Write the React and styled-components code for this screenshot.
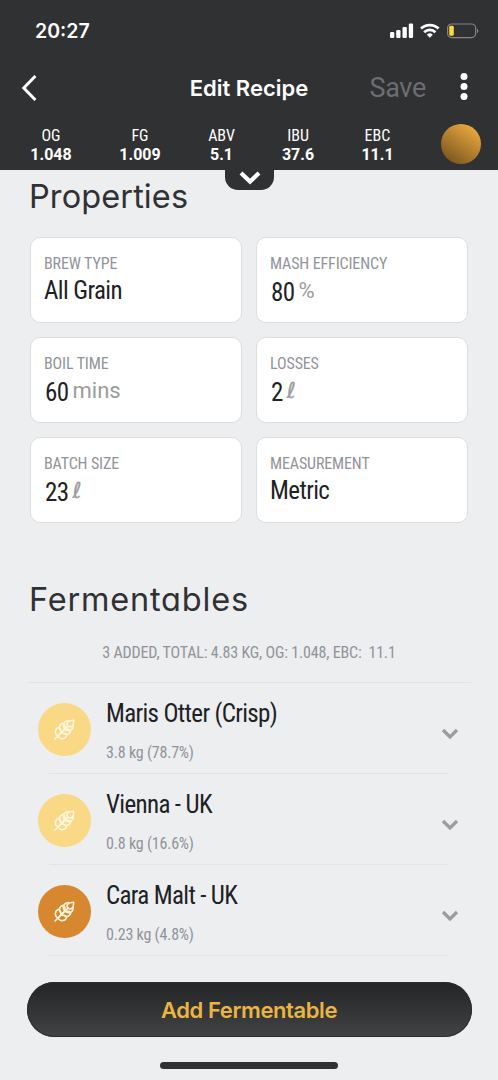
import React, { useState } from "react";
import styled, { createGlobalStyle } from "styled-components";

const stats = [
  { label: "OG", value: "1.048", width: 102 },
  { label: "FG", value: "1.009", width: 76 },
  { label: "ABV", value: "5.1", width: 87 },
  { label: "IBU", value: "37.6", width: 66 },
  { label: "EBC", value: "11.1", width: 93 },
];

const properties = [
  { label: "Brew Type", value: "All Grain" },
  { label: "Mash Efficiency", value: "80", unit: "%" },
  { label: "Boil Time", value: "60", unit: "mins" },
  { label: "Losses", value: "2", unit: "ℓ" },
  { label: "Batch Size", value: "23", unit: "ℓ" },
  { label: "Measurement", value: "Metric" },
];

const fermentables = [
  { name: "Maris Otter (Crisp)", amount: "3.8 kg (78.7%)", color: "#f9d985" },
  { name: "Vienna - UK", amount: "0.8 kg (16.6%)", color: "#f9d985" },
  { name: "Cara Malt - UK", amount: "0.23 kg (4.8%)", color: "#d7872e" },
];

function WheatIcon() {
  return (
    <svg width="21" height="21" viewBox="0 0 21 21" fill="none" stroke="#fff6df" strokeWidth="1.5" strokeLinecap="round" strokeLinejoin="round">
      <path d="M1 20L4 17" />
      <path d="M14 7C11.6 4.6 13.4 1.4 19.8 1.2C19.6 7.6 16.4 9.4 14 7Z" />
      <path d="M11 10C8 7.4 8.8 2.2 14.6 1.6" />
      <path d="M11 10C13.6 13 18.8 12.2 19.4 6.4" />
      <path d="M14 7L11 10" />
      <path d="M8 13C4.4 11 4.4 5.6 9.2 4.2C12 6.4 11.8 10 8 13Z" />
      <path d="M8 13C10 16.6 15.4 16.6 16.8 11.8C14.6 9 11 9.2 8 13Z" />
      <path d="M4 17C.4 15.2 .2 9.6 5 8.2C8 10.8 7.6 14.4 4 17Z" />
      <path d="M4 17C5.8 20.6 11.4 20.8 12.8 16C10.2 13 6.6 13.4 4 17Z" />
    </svg>
  );
}

export default function App() {
  const [open, setOpen] = useState(null);

  return (
    <Container>
      <GlobalStyle />
      <Header>
        <StatusBar>
          <Time>20:27</Time>
          <svg width="90" height="16" viewBox="0 0 90 16" fill="#fff">
            <rect x="0" y="9" width="4.3" height="6" rx="1.2" />
            <rect x="6.2" y="7" width="4.3" height="8" rx="1.2" />
            <rect x="12.5" y="4" width="4.3" height="11" rx="1.2" />
            <rect x="18.8" y="0.5" width="4.3" height="14.5" rx="1.2" />
            <g fill="none" stroke="#fff" strokeWidth="2.7">
              <path d="M31 5.6A12.8 12.8 0 0 1 48.6 5.6" />
              <path d="M34.2 9.2A8 8 0 0 1 45.4 9.2" />
            </g>
            <path d="M39.8 14.8L36.8 11.8A4.3 4.3 0 0 1 42.8 11.8Z" />
            <rect x="57.6" y="1" width="28" height="13.6" rx="4" fill="none" stroke="#85868a" strokeWidth="1.2" />
            <rect x="59.2" y="2.8" width="4.6" height="10" rx="1.4" fill="#fbd63f" />
            <path d="M87 5.4A2.8 2.8 0 0 1 87 10.2Z" fill="#85868a" />
          </svg>
        </StatusBar>
        <NavBar>
          <IconButton aria-label="Back">
            <svg width="16" height="28" viewBox="0 0 16 28" fill="none" stroke="#fff" strokeWidth="3">
              <path d="M14.4 2L2.8 14L14.4 26" />
            </svg>
          </IconButton>
          <Title>Edit Recipe</Title>
          <SaveButton>Save</SaveButton>
          <IconButton aria-label="More">
            <svg width="8" height="28" viewBox="0 0 8 28" fill="#fff">
              <circle cx="4" cy="3.5" r="3.5" />
              <circle cx="4" cy="13.5" r="3.5" />
              <circle cx="4" cy="23.5" r="3.5" />
            </svg>
          </IconButton>
        </NavBar>
        <Stats>
          {stats.map((s) => (
            <Stat key={s.label} $width={s.width}>
              <span>{s.label}</span>
              <b>{s.value}</b>
            </Stat>
          ))}
          <BeerColor />
        </Stats>
        <PullTab aria-label="Expand">
          <svg width="24" height="16" viewBox="0 0 24 16" fill="none" stroke="#fff" strokeWidth="4.2">
            <path d="M3 4L12 12.6L21 4" />
          </svg>
        </PullTab>
      </Header>

      <Content>
        <Heading $spacing={0.1}>Properties</Heading>
        <Grid>
          {properties.map((p) => (
            <Card key={p.label}>
              <Label>{p.label}</Label>
              <Value $hasUnit={!!p.unit}>
                {p.value}
                {p.unit && <Unit $script={p.unit === "ℓ"}>{p.unit}</Unit>}
              </Value>
            </Card>
          ))}
        </Grid>

        <Heading $spacing={0.8}>Fermentables</Heading>
        <Summary>3 added, total: 4.83 kg, OG: 1.048, EBC:&nbsp; 11.1</Summary>
        <List>
          {fermentables.map((f, i) => (
            <Row key={f.name} onClick={() => setOpen(open === i ? null : i)}>
              <Badge $color={f.color}>
                <WheatIcon />
              </Badge>
              <RowText>
                <Name>{f.name}</Name>
                <Amount>{f.amount}</Amount>
              </RowText>
              <Chevron width="18" height="12" viewBox="0 0 18 12" $open={open === i}>
                <path d="M2 2L9 9L16 2" />
              </Chevron>
            </Row>
          ))}
        </List>
      </Content>

      <Footer>
        <AddButton>Add Fermentable</AddButton>
        <HomeBar />
      </Footer>
    </Container>
  );
}

const GlobalStyle = createGlobalStyle`
  * {
    box-sizing: border-box;
  }
  body {
    margin: 0;
    background: #edeef0;
    font-family: "Roboto Condensed", Roboto, sans-serif;
    font-stretch: 75%;
  }
  button {
    padding: 0;
    border: none;
    background: none;
    cursor: pointer;
  }
`;

const Container = styled.div`
  display: flex;
  flex-direction: column;
  height: 1080px;
  overflow: hidden;
  color: #202124;
`;

const Header = styled.header`
  position: relative;
  flex: none;
  height: 170px;
  background: #303133;
  color: #fff;
`;

const StatusBar = styled.div`
  display: flex;
  justify-content: space-between;
  align-items: center;
  height: 60px;
  padding: 1px 18px 0 35px;
`;

const Time = styled.span`
  font: 600 19.5px Inter, sans-serif;
`;

const NavBar = styled.nav`
  display: grid;
  grid-template-columns: 170px 158px 98px 72px;
  align-items: center;
  height: 55px;
  button:first-child {
    justify-self: start;
    margin-left: 21px;
  }
  button:last-child {
    margin: -2px 0 0 3px;
  }
`;

const IconButton = styled.button`
  display: flex;
  justify-content: center;
`;

const Title = styled.h1`
  margin: 0;
  text-align: center;
  white-space: nowrap;
  font: 600 22px Inter, sans-serif;
`;

const SaveButton = styled.button`
  justify-self: end;
  color: #6c6d6f;
  font: 400 27px Roboto, sans-serif;
  font-stretch: 100%;
  letter-spacing: -0.3px;
`;

const Stats = styled.div`
  display: flex;
  padding-top: 11px;
`;

const Stat = styled.div`
  display: flex;
  flex-direction: column;
  align-items: center;
  width: ${({ $width }) => $width}px;
  font-size: 16px;
  line-height: 19px;
  b {
    font-weight: 700;
    font-stretch: 100%;
    font-family: Roboto, sans-serif;
    font-size: 16px;
  }
`;

const BeerColor = styled.div`
  width: 40px;
  height: 40px;
  margin: -2px 0 0 17px;
  border-radius: 50%;
  background: linear-gradient(215deg, #e5a53c 15%, #7a5520 90%);
`;

const PullTab = styled.button`
  position: absolute;
  left: 225px;
  bottom: -20px;
  display: flex;
  justify-content: center;
  align-items: center;
  width: 49px;
  height: 26px;
  border-radius: 0 0 13px 13px;
  background: #303133;
`;

const Content = styled.main`
  flex: 1;
  padding: 0 27px;
`;

const Heading = styled.h2`
  margin: 0 2px;
  height: 53px;
  color: #303133;
  font: 400 32.5px/53px Inter, sans-serif;
  font-feature-settings: "cv11";
  letter-spacing: ${({ $spacing }) => $spacing}px;
`;

const Grid = styled.div`
  display: grid;
  grid-template-columns: 1fr 1fr;
  gap: 14px;
  margin: 14px 3px 50px;
`;

const Card = styled.div`
  height: 86px;
  padding: 16px 13px;
  border: 1px solid #dcdddf;
  border-radius: 10px;
  background: #fff;
`;

const Label = styled.div`
  color: #919399;
  font-size: 16px;
  line-height: 20px;
  letter-spacing: -0.13px;
  text-transform: uppercase;
`;

const Value = styled.div`
  display: flex;
  gap: 4px;
  padding: ${({ $hasUnit }) => ($hasUnit ? "4px 1px" : "2px 0")};
  font-size: 25px;
  line-height: 30px;
  letter-spacing: -0.6px;
`;

const Unit = styled.span`
  position: relative;
  top: -2px;
  color: #9b9b9b;
  font-family: ${({ $script }) => ($script ? '"DejaVu Sans"' : "Roboto")}, sans-serif;
  font-stretch: 100%;
  font-size: 22px;
  letter-spacing: 0;
  -webkit-text-stroke: ${({ $script }) => ($script ? "0.3px #9b9b9b" : "0")};
`;

const Summary = styled.div`
  height: 56px;
  text-align: center;
  color: #919399;
  font-size: 16px;
  line-height: 54px;
  letter-spacing: -0.18px;
  text-transform: uppercase;
`;

const List = styled.div`
  border-top: 1px solid #e2e3e5;
`;

const Row = styled.div`
  display: flex;
  align-items: center;
  height: 91px;
  padding: 0 12px 0 11px;
  background: linear-gradient(#e2e3e5, #e2e3e5) 22px 100% / 399px 1px no-repeat;
`;

const Badge = styled.div`
  display: flex;
  justify-content: center;
  align-items: center;
  width: 53px;
  height: 53px;
  margin-top: 2px;
  border-radius: 50%;
  background: ${({ $color }) => $color};
`;

const RowText = styled.div`
  flex: 1;
  margin: 4px 0 0 15px;
`;

const Name = styled.div`
  font-size: 25px;
  line-height: 30px;
  letter-spacing: -0.65px;
`;

const Amount = styled.div`
  margin-top: 14px;
  color: #919399;
  font-size: 16px;
  line-height: 20px;
  letter-spacing: -0.2px;
`;

const Chevron = styled.svg`
  margin-top: 11px;
  fill: none;
  stroke: #9b9c9e;
  stroke-width: 3.2;
  transform: ${({ $open }) => ($open ? "rotate(180deg)" : "none")};
`;

const Footer = styled.footer`
  display: flex;
  flex-direction: column;
  align-items: center;
  flex: none;
  height: 98px;
`;

const AddButton = styled.button`
  width: 445px;
  height: 55px;
  border-radius: 28px;
  background: linear-gradient(#232426, #424345);
  box-shadow: inset 0 0 0 1px #2b2c2e;
  color: #eab541;
  font: 600 22px Inter, sans-serif;
  letter-spacing: -0.4px;
`;

const HomeBar = styled.div`
  width: 178px;
  height: 7px;
  margin-top: 25px;
  border-radius: 4px;
  background: #303133;
`;
